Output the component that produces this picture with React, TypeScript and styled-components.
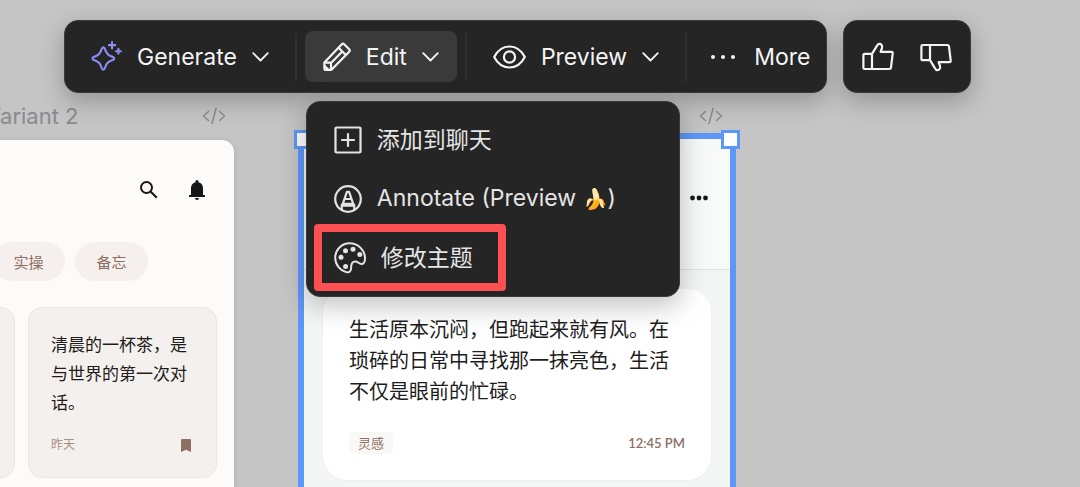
import React from 'react';
import styled, { createGlobalStyle } from 'styled-components';

const GlobalStyle = createGlobalStyle`
  *, *::before, *::after { box-sizing: border-box; }
  body { margin: 0; font-family: Inter, 'Noto Sans CJK SC', sans-serif; }
  button { font: inherit; color: inherit; border: 0; background: none; padding: 0; cursor: pointer; }
  p, h2 { margin: 0; font-weight: 400; }
  svg { display: block; flex: none; }
`;

const Canvas = styled.main`
  position: relative;
  min-height: 100vh;
  overflow: hidden;
  background: #c5c5c5;
`;

/* Floating toolbar */

const ToolbarArea = styled.header`
  position: relative;
  z-index: 2;
  display: flex;
  align-items: stretch;
  gap: 16px;
  padding: 20px 64px;
`;

const Panel = styled.div`
  display: flex;
  align-items: center;
  height: 73px;
  padding: 0 8px;
  border: 1px solid #3a3a3a;
  border-radius: 14px;
  background: #252525;
  color: #f4f4f4;
  box-shadow: 0 8px 24px rgba(0, 0, 0, 0.26);
`;

const Divider = styled.span`
  width: 2px;
  height: 48px;
  margin: 0 8px;
  background: #303034;
`;

const MenuAnchor = styled.div`
  position: relative;
`;

const ToolButton = styled.button<{ $active?: boolean }>`
  display: flex;
  align-items: center;
  gap: 15px;
  height: 51px;
  padding: 0 18px;
  border-radius: 8px;
  background: ${(p) => (p.$active ? '#3a3a3a' : 'transparent')};
  font-size: 23px;
  line-height: 28px;
  white-space: nowrap;
`;

const MoreButton = styled(ToolButton)`
  gap: 18px;
  padding: 0 8px 0 15px;
`;

const VoteButton = styled.button`
  display: flex;
  align-items: center;
  justify-content: center;
  width: 58px;
  height: 51px;
`;

const Votes = styled(Panel)`
  padding: 0 5px;
`;

const Menu = styled.div`
  position: absolute;
  top: 70px;
  left: 1px;
  width: 374px;
  padding: 8px 0 9px;
  border: 1px solid #3a3a3a;
  border-radius: 14px;
  background: #252525;
  color: #e4e4e4;
  box-shadow: 0 8px 28px rgba(0, 0, 0, 0.26);
`;

const MenuItem = styled.button`
  position: relative;
  display: flex;
  align-items: center;
  gap: 15px;
  width: 100%;
  height: 59px;
  padding: 0 27px;
  font-size: 23px;
  line-height: 30px;
  white-space: nowrap;
`;

const Emoji = styled.span`
  font-size: 20px;
`;

const Highlight = styled.span`
  position: absolute;
  left: 7px;
  top: -4px;
  width: 192px;
  height: 67px;
  border: 8px solid #fb5153;
  border-radius: 4px;
  pointer-events: none;
`;

/* Artboards */

const Frame = styled.section<{ $left: number; $width: number }>`
  position: absolute;
  top: 100px;
  bottom: 0;
  left: ${(p) => p.$left}px;
  width: ${(p) => p.$width}px;
  display: flex;
  flex-direction: column;
`;

const FrameHeader = styled.div<{ $selected?: boolean }>`
  display: flex;
  align-items: center;
  justify-content: ${(p) => (p.$selected ? 'flex-end' : 'space-between')};
  height: ${(p) => (p.$selected ? 33 : 40)}px;
  padding: 0 ${(p) => (p.$selected ? 13 : 8)}px ${(p) => (p.$selected ? 2 : 8)}px 177px;
  color: #8a8a8e;
`;

const FrameTitle = styled.h2`
  font-size: 22px;
  line-height: 28px;
  white-space: nowrap;
`;

const Artboard = styled.div`
  flex: 1;
  border-radius: 12px 12px 0 0;
  background: #fcfbf9;
  box-shadow: 0 2px 6px rgba(0, 0, 0, 0.14);
`;

const AppBar = styled.div`
  display: flex;
  justify-content: flex-end;
  gap: 24px;
  padding: 38px 25px 40px;
  color: #171717;
`;

const IconButton = styled.button`
  display: block;
`;

const Chips = styled.div`
  display: flex;
  gap: 10px;
  padding-left: 183px;
`;

const Chip = styled.button`
  width: 73px;
  height: 39px;
  padding-top: 2px;
  border-radius: 20px;
  background: #f5f0ed;
  color: #8d6e63;
  font-size: 15px;
  line-height: 20px;
`;

const NoteGrid = styled.div`
  display: grid;
  grid-template-columns: 1fr 1fr;
  gap: 13px;
  padding: 26px 17px 0;
`;

const Note = styled.article`
  display: flex;
  flex-direction: column;
  justify-content: space-between;
  min-height: 171px;
  padding: 23px 25px 22px 22px;
  border: 1px solid #ebe7e3;
  border-radius: 14px;
  background: #f4f0ed;
`;

const NoteText = styled.p`
  color: #1f1d1c;
  font-size: 17px;
  line-height: 29px;
`;

const NoteFooter = styled.div`
  display: flex;
  align-items: center;
  justify-content: space-between;
  color: #8d6e63;
  font-size: 12px;
  line-height: 20px;
`;

const Faded = styled.span`
  opacity: 0.75;
`;

const SelectedArtboard = styled.div`
  position: relative;
  flex: 1;
  border: 6px solid #5d97f8;
  border-bottom: 0;
  background: #f4f5f5;
`;

const Handle = styled.span<{ $side: 'left' | 'right' }>`
  position: absolute;
  top: -9px;
  ${(p) => p.$side}: -10px;
  width: 19px;
  height: 19px;
  border: 3px solid #5d97f8;
  background: #fff;
`;

const SelectedBar = styled.div`
  display: flex;
  align-items: center;
  justify-content: flex-end;
  height: 131px;
  padding: 0 22px 12px;
  border-bottom: 1px solid #e2e3e3;
  background: #f8f9f9;
  color: #171717;
`;

const Post = styled.article`
  margin: 19px 19px 0;
  padding: 26px;
  border-radius: 24px;
  background: #fff;
  box-shadow: 0 1px 3px rgba(0, 0, 0, 0.03);
`;

const PostText = styled.p`
  color: #1d1d1d;
  font-size: 20px;
  line-height: 31px;
`;

const PostFooter = styled.div`
  display: flex;
  align-items: center;
  justify-content: space-between;
  margin-top: 24px;
  color: #8d6e63;
  font-size: 13px;
  line-height: 22px;
`;

const Tag = styled.span`
  padding: 0 9px;
  border-radius: 5px;
  background: #faf8f7;
`;

const Time = styled.time`
  font-family: Lato, sans-serif;
  font-size: 13px;
  font-weight: 600;
`;

/* Icons */

const line = {
  fill: 'none',
  stroke: 'currentColor',
  strokeWidth: 2.2,
  strokeLinecap: 'round',
  strokeLinejoin: 'round',
} as const;

const SparkleIcon = () => (
  <svg width="31" height="34" viewBox="0 0 32 34" {...line} stroke="#8d8df6">
    <path d="M12.7 7c-1.2 0-1.500 1-1.900 2.300-1.100 3.900-2.500 5.900-7.100 7.300-1.300.4-2.300.8-2.300 1.900s1 1.500 2.300 1.900c4.600 1.400 6 3.400 7.100 7.300.4 1.300.7 2.500 1.900 2.500s1.500-1.200 1.900-2.500c1.100-3.900 2.500-5.900 7.100-7.300 1.300-.4 2.300-.8 2.300-1.900s-1-1.500-2.300-1.900c-4.600-1.400-6-3.400-7.100-7.300C14.200 8 13.900 7 12.700 7Z" />
    <path d="M21.700 1.500v6.600M18.400 4.800H25M28.300 8.600v5M25.800 11.100h5" />
  </svg>
);

const ChevronIcon = () => (
  <svg width="17" height="10" viewBox="0 0 17 10" {...line} strokeWidth={1.800}>
    <path d="m1.200 1.200 7.300 7.300 7.300-7.300" />
  </svg>
);

const PencilIcon = () => (
  <svg width="28" height="30" viewBox="0 0 28 30" {...line}>
    <path d="M1.600 20.300 18.800 2.300q1.200-1.200 2.400 0l5 5q1.200 1.200 0 2.400L9 27.200q-.5.600-1.300.6H2.800q-1.400 0-1.400-1.400v-5q0-.7.200-1.100Z" />
    <path d="m15.600 5.800 7.200 7.200M18.800 9.900 8 20.900M1.800 20.700H8v6.600M1.800 24.200l3.400 3.400" />
  </svg>
);

const EyeIcon = () => (
  <svg width="33" height="24" viewBox="0 0 33 24" {...line}>
    <path d="M1.200 12C4.600 5.400 10 1.500 16.500 1.500S28.400 5.400 31.800 12C28.400 18.600 23 22.500 16.500 22.500S4.600 18.600 1.200 12Z" />
    <circle cx="16.500" cy="12" r="5.600" />
  </svg>
);

const DotsIcon = () => (
  <svg width="26" height="6" viewBox="0 0 26 6" fill="currentColor">
    <circle cx="3" cy="3" r="2" />
    <circle cx="13" cy="3" r="2" />
    <circle cx="23" cy="3" r="2" />
  </svg>
);

const ThumbIcon = ({ down = false }: { down?: boolean }) => (
  <svg width="32" height="30" viewBox="0 0 32 30" {...line}>
    <g transform={down ? 'matrix(1 0 0 -1 0 31)' : 'translate(0 -1)'}>
      <path d="M10 12.800H2.700q-1.300 0-1.300 1.300v12.600q0 1.300 1.300 1.300H27.300q1.500 0 1.700-1.500l1.700-14.200q.2-1.500-1.300-1.500H18.600l1.400-3.800c.7-2.900-1-4.100-2.600-4.100-1.300 0-2 .8-2.500 2L10 12.800V28" />
    </g>
  </svg>
);

const AddSquareIcon = () => (
  <svg width="28" height="28" viewBox="0 0 28 28" {...line}>
    <rect x="1.500" y="1.500" width="25" height="25" rx="1" />
    <path d="M14 8v12M8 14h12" />
  </svg>
);

const AnnotateIcon = () => (
  <svg width="28" height="28" viewBox="0 0 28 28" {...line}>
    <circle cx="14" cy="14" r="12.800" />
    <path d="M12.900 6.800h2.200l4.100 12H8.800ZM11.200 14h5.600M8.800 18.800l-1 .9v4.500M19.200 18.800l1 .9v4.500M8 20.600h12" />
  </svg>
);

const PaletteIcon = () => (
  <svg width="32" height="32" viewBox="0 0 32 32" {...line} strokeWidth={2}>
    <path d="M15.700 1.300C7.700 1.300 1.200 7.600 1.200 15.800c0 6.700 4.700 12.500 10.900 14.300 3.400 1 5-1.200 5-4.200 0-4.100 1.200-6.400 4.300-6.400 2.700 0 3.400 2.500 6 2.500 2.500 0 3.600-2.600 3.600-5.600C31 7.800 23.700 1.300 15.700 1.300Z" />
    <g fill="currentColor" stroke="none">
      <circle cx="7" cy="15.300" r="2.500" />
      <circle cx="11.500" cy="8.800" r="2.500" />
      <circle cx="19" cy="7.300" r="2.500" />
      <circle cx="25.800" cy="12.400" r="2.500" />
      <circle cx="11.600" cy="24.500" r="2.500" />
    </g>
  </svg>
);

const CodeIcon = () => (
  <svg width="24" height="18" viewBox="0 0 24 18" {...line} strokeWidth={1.500}>
    <path d="m6.500 4.500-5 4.500 5 4.500M17.500 4.500l5 4.500-5 4.500M14 1.500l-4 15" />
  </svg>
);

const SearchIcon = () => (
  <svg width="24" height="24" viewBox="0 0 24 24" {...line} strokeWidth={2} strokeLinecap="butt">
    <circle cx="9.500" cy="9.500" r="5.500" />
    <path d="m13.500 13.500 6.300 6.300" />
  </svg>
);

const BellIcon = () => (
  <svg width="24" height="24" viewBox="0 0 24 24" fill="currentColor">
    <path d="M4 19v-2h2v-7c0-2.800 1.800-5.200 4.500-5.800v-.7a1.500 1.500 0 0 1 3 0v.7c2.700.6 4.500 3 4.500 5.800v7h2v2ZM12 22a2 2 0 0 1-2-2h4a2 2 0 0 1-2 2Z" />
  </svg>
);

const BookmarkIcon = () => (
  <svg width="10" height="13" viewBox="0 0 10 13" fill="currentColor">
    <path d="M1 0h8q1 0 1 1v12l-5-2.200L0 13V1q0-1 1-1Z" />
  </svg>
);

const EllipsisIcon = () => (
  <svg width="18" height="6" viewBox="0 0 18 6" fill="currentColor">
    <circle cx="2.500" cy="3" r="2.400" />
    <circle cx="9" cy="3" r="2.400" />
    <circle cx="15.500" cy="3" r="2.400" />
  </svg>
);

export default function App() {
  return (
    <>
      <GlobalStyle />
      <Canvas>
        <ToolbarArea>
          <Panel role="toolbar">
            <ToolButton>
              <SparkleIcon />
              Generate
              <ChevronIcon />
            </ToolButton>
            <Divider />
            <MenuAnchor>
              <ToolButton $active>
                <PencilIcon />
                Edit
                <ChevronIcon />
              </ToolButton>
              <Menu role="menu">
                <MenuItem role="menuitem">
                  <AddSquareIcon />
                  添加到聊天
                </MenuItem>
                <MenuItem role="menuitem">
                  <AnnotateIcon />
                  <span>
                    Annotate (Preview <Emoji>🍌</Emoji>)
                  </span>
                </MenuItem>
                <MenuItem role="menuitem">
                  <PaletteIcon />
                  修改主题
                  <Highlight />
                </MenuItem>
              </Menu>
            </MenuAnchor>
            <Divider />
            <ToolButton>
              <EyeIcon />
              Preview
              <ChevronIcon />
            </ToolButton>
            <Divider />
            <MoreButton>
              <DotsIcon />
              More
            </MoreButton>
          </Panel>
          <Votes>
            <VoteButton aria-label="Good result">
              <ThumbIcon />
            </VoteButton>
            <VoteButton aria-label="Bad result">
              <ThumbIcon down />
            </VoteButton>
          </Votes>
        </ToolbarArea>

        <Frame $left={-191} $width={425}>
          <FrameHeader>
            <FrameTitle>Variant 2</FrameTitle>
            <CodeIcon />
          </FrameHeader>
          <Artboard>
            <AppBar>
              <IconButton aria-label="Search">
                <SearchIcon />
              </IconButton>
              <IconButton aria-label="Notifications">
                <BellIcon />
              </IconButton>
            </AppBar>
            <Chips>
              <Chip>实操</Chip>
              <Chip>备忘</Chip>
            </Chips>
            <NoteGrid>
              <Note />
              <Note>
                <NoteText>清晨的一杯茶，是与世界的第一次对话。</NoteText>
                <NoteFooter>
                  <Faded>昨天</Faded>
                  <BookmarkIcon />
                </NoteFooter>
              </Note>
            </NoteGrid>
          </Artboard>
        </Frame>

        <Frame $left={298} $width={438}>
          <FrameHeader $selected>
            <CodeIcon />
          </FrameHeader>
          <SelectedArtboard>
            <SelectedBar>
              <IconButton aria-label="Options">
                <EllipsisIcon />
              </IconButton>
            </SelectedBar>
            <Post>
              <PostText>生活原本沉闷，但跑起来就有风。在琐碎的日常中寻找那一抹亮色，生活不仅是眼前的忙碌。</PostText>
              <PostFooter>
                <Tag>灵感</Tag>
                <Time>12:45 PM</Time>
              </PostFooter>
            </Post>
            <Handle $side="left" />
            <Handle $side="right" />
          </SelectedArtboard>
        </Frame>
      </Canvas>
    </>
  );
}
